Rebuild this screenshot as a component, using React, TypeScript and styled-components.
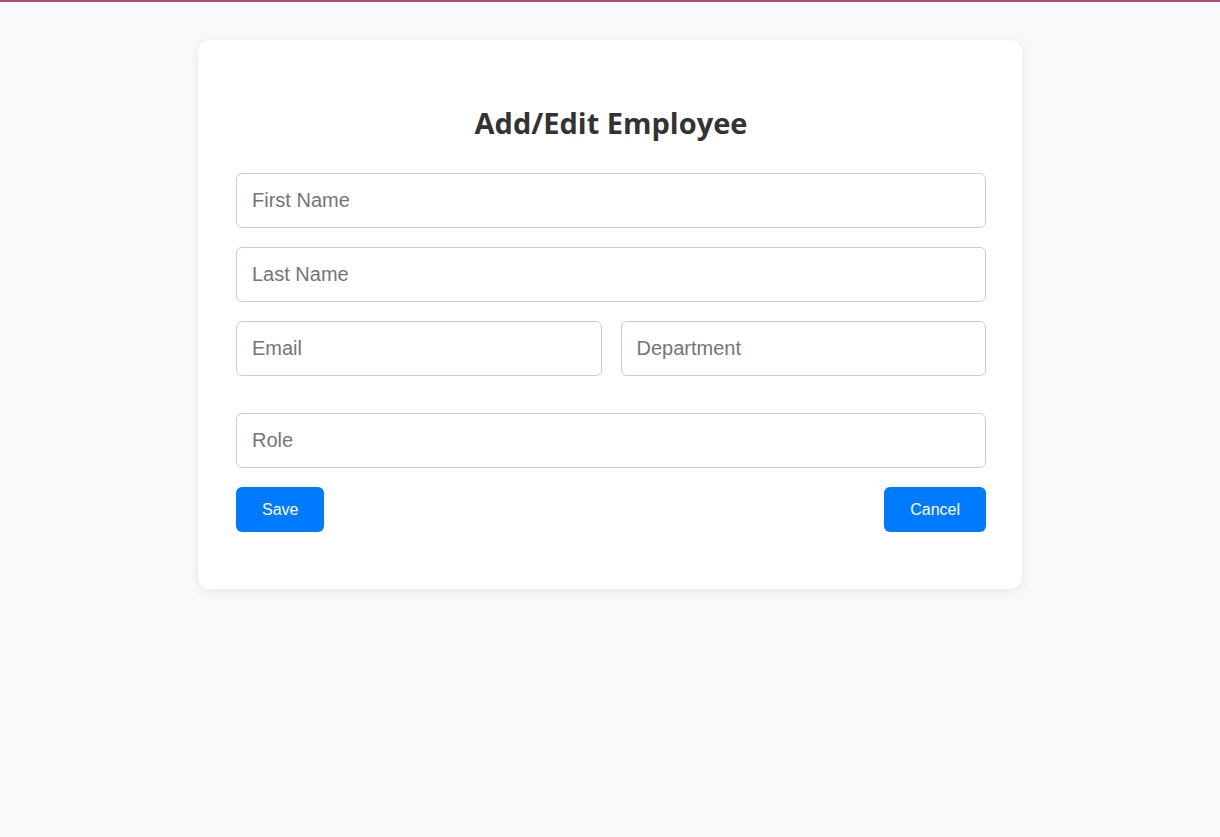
import React from "react";
import styled, { createGlobalStyle } from "styled-components";

const Global = createGlobalStyle`
  html, body { margin: 0; padding: 0; }
  body {
    background: #f8f9fa;
    border-top: 2px solid #b8497a;
    min-height: 835px;
    font-family: "Liberation Sans", Arial, sans-serif;
  }
  * { box-sizing: border-box; }
`;

const Page = styled.div`
  display: flex;
  justify-content: flex-start;
  padding: 38px 0 0 198px;
`;

const Card = styled.form`
  width: 824px;
  background: #fff;
  border-radius: 12px;
  box-shadow: 0 2px 12px rgba(0, 0, 0, 0.08);
  padding: 64px 36px 57px 38px;
  display: flex;
  flex-direction: column;
`;

const Title = styled.h2`
  margin: 0 0 31px;
  text-align: center;
  font-family: "Open Sans", "Noto Sans", sans-serif;
  font-weight: 700;
  font-size: 29px;
  line-height: 38px;
  color: #333;
`;

const Field = styled.input`
  display: block;
  width: 100%;
  height: 55px;
  padding: 0 15px;
  border: 1px solid #ccc;
  border-radius: 6px;
  font-family: "Liberation Sans", Arial, sans-serif;
  font-size: 20px;
  color: #333;
  outline: none;
  background: #fff;
  &::placeholder { color: #757575; }
`;

const Stack = styled.div<{ $gap: number; $mb?: number }>`
  display: flex;
  flex-direction: column;
  gap: ${(p) => p.$gap}px;
  margin-bottom: ${(p) => p.$mb ?? 0}px;
`;

const Row = styled.div`
  display: grid;
  grid-template-columns: 1fr 1fr;
  column-gap: 19px;
`;

const Actions = styled.div`
  display: flex;
  justify-content: space-between;
`;

const Button = styled.button`
  height: 45px;
  padding: 0 26px;
  border: none;
  border-radius: 6px;
  background: #007bff;
  color: #fff;
  font-family: "Liberation Sans", Arial, sans-serif;
  font-size: 16px;
  cursor: pointer;
`;

export default function App() {
  return (
    <>
      <Global />
      <Page>
        <Card onSubmit={(e) => e.preventDefault()}>
          <Title>Add/Edit Employee</Title>
          <Stack $gap={19} $mb={37}>
            <Field placeholder="First Name" />
            <Field placeholder="Last Name" />
            <Row>
              <Field placeholder="Email" />
              <Field placeholder="Department" />
            </Row>
          </Stack>
          <Stack $gap={19}>
            <Field placeholder="Role" />
            <Actions>
              <Button type="submit">Save</Button>
              <Button type="button">Cancel</Button>
            </Actions>
          </Stack>
        </Card>
      </Page>
    </>
  );
}
